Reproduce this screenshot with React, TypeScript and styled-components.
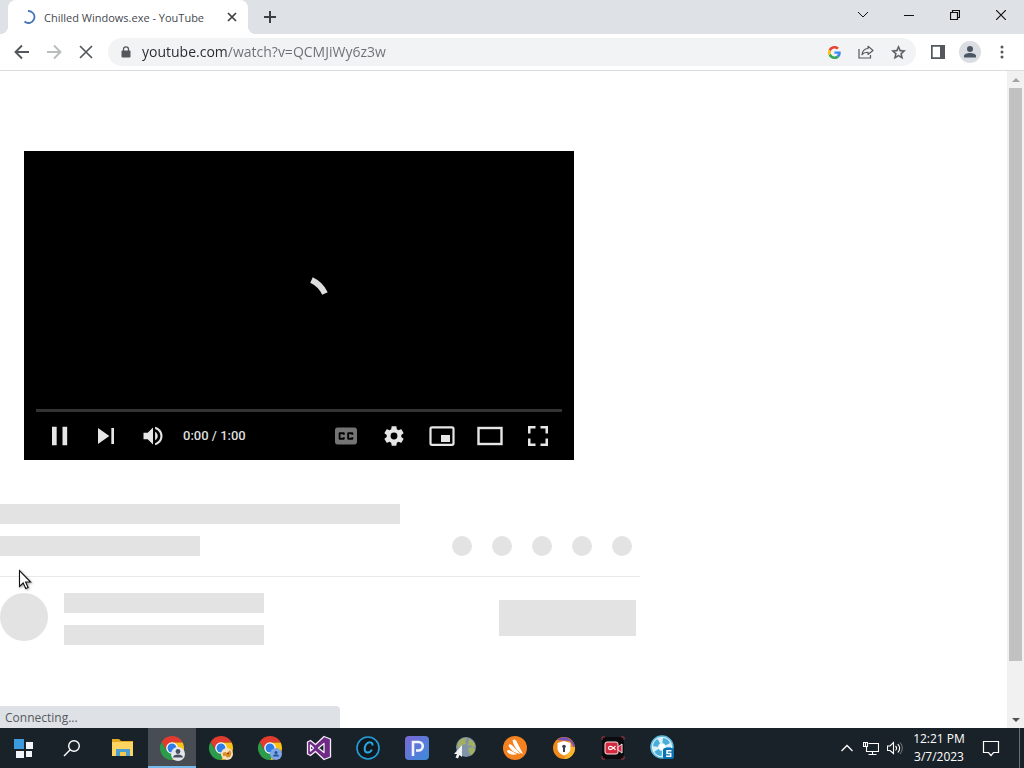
import React from "react";
import styled, { createGlobalStyle } from "styled-components";

const uiFont = `"Open Sans", "Noto Sans", sans-serif`;

const GlobalStyle = createGlobalStyle`
  *, *::before, *::after { box-sizing: border-box; }
  body { margin: 0; background: #fff; font-family: ${uiFont}; }
  button { border: 0; padding: 0; background: none; color: inherit; font: inherit; }
  svg { display: block; flex: none; }
`;

const Desktop = styled.div`
  position: relative;
  display: flex;
  flex-direction: column;
  min-height: 100vh;
  overflow: hidden;
`;

/* ---------- Browser window ---------- */

const TabStrip = styled.header`
  display: flex;
  height: 34px;
  padding-left: 8px;
  background: #dee1e6;
`;

const Tab = styled.div`
  position: relative;
  display: flex;
  align-items: center;
  width: 240px;
  padding: 0 8px 0 14px;
  gap: 8px;
  background: #fff;
  border-radius: 8px 8px 0 0;
  color: #45494d;
  font-size: 11px;

  &::before,
  &::after {
    content: "";
    position: absolute;
    bottom: 0;
    width: 8px;
    height: 8px;
  }
  &::before {
    right: 100%;
    background: radial-gradient(circle at 0 0, transparent 8px, #fff 8px);
  }
  &::after {
    left: 100%;
    background: radial-gradient(circle at 100% 0, transparent 8px, #fff 8px);
  }
`;

const TabTitle = styled.span`
  flex: 1;
  white-space: nowrap;
`;

const TabButton = styled.button`
  display: grid;
  place-items: center;
  width: 16px;
  height: 16px;
  color: #3c4043;
`;

const NewTabButton = styled(TabButton)`
  width: 28px;
  height: 34px;
  margin-left: 8px;
`;

const WindowControls = styled.div`
  display: flex;
  margin-left: auto;
`;

const WindowButton = styled.button`
  display: grid;
  place-items: center;
  width: 46px;
  height: 29px;
  color: #111;
`;

const Toolbar = styled.nav`
  display: flex;
  align-items: center;
  gap: 4px;
  height: 37px;
  padding: 0 8px;
  background: #fff;
  border-bottom: 1px solid #d9dbde;
`;

const ToolButton = styled.button<{ $dim?: boolean }>`
  display: grid;
  place-items: center;
  width: 28px;
  height: 28px;
  flex: none;
  color: ${(p) => (p.$dim ? "#babcbe" : "#54585c")};
`;

const Omnibox = styled.div`
  display: flex;
  align-items: center;
  flex: 1;
  gap: 4px;
  height: 28px;
  margin: 0 4px;
  padding: 0 4px 0 12px;
  border-radius: 14px;
  background: #f1f3f4;
  color: #54585c;
`;

const AddressInput = styled.input`
  flex: 1;
  min-width: 0;
  margin-left: 6px;
  padding: 0;
  border: 0;
  outline: 0;
  font-family: ${uiFont};
  font-size: 14px;
  line-height: 20px;
  background: linear-gradient(90deg, #27292c 86px, #6b6f73 86px);
  -webkit-background-clip: text;
  background-clip: text;
  -webkit-text-fill-color: transparent;
`;

const Viewport = styled.div`
  position: relative;
  display: flex;
  flex: 1;
`;

const Page = styled.main`
  flex: 1;
  min-width: 0;
  padding: 80px 0 61px;
`;

const Scrollbar = styled.div`
  display: flex;
  flex-direction: column;
  width: 17px;
  background: #f1f1f1;
`;

const ScrollArrow = styled.button`
  display: grid;
  place-items: center;
  height: 17px;
`;

const ScrollTrack = styled.div`
  flex: 1;
  padding: 0 2px;
`;

const ScrollThumb = styled.div`
  height: 92%;
  background: #c1c1c1;
`;

const StatusBubble = styled.div`
  position: absolute;
  left: 0;
  bottom: 0;
  width: 340px;
  height: 22px;
  padding-left: 5px;
  border-radius: 0 4px 0 0;
  background: #dee1e6;
  color: #55595d;
  font-size: 12px;
  line-height: 24px;
`;

/* ---------- Video player ---------- */

const Player = styled.section`
  position: relative;
  display: flex;
  flex-direction: column;
  justify-content: flex-end;
  max-width: 550px;
  height: 309px;
  margin-left: 24px;
  padding: 0 12px;
  background: #000;
`;

const Spinner = styled.div`
  position: absolute;
  inset: 0;
  display: grid;
  place-items: center;
`;

const ProgressBar = styled.div`
  height: 3px;
  background: #333;
`;

const PlayerControls = styled.div`
  position: relative;
  display: flex;
  align-items: center;
  height: 48px;
  color: #e6e6e6;
`;

const PlayerButton = styled.button<{ $narrow?: boolean }>`
  display: grid;
  place-items: center;
  width: ${(p) => (p.$narrow ? 46 : 48)}px;
  height: 48px;
`;

const Time = styled.span`
  flex: 1;
  padding-left: 7px;
  font-family: Roboto, "Liberation Sans", sans-serif;
  font-size: 13px;
  font-weight: 500;
  line-height: 48px;
  color: #ddd;
`;

/* ---------- Loading placeholders ---------- */

const Meta = styled.section`
  max-width: 640px;
  margin-top: 44px;
`;

const Bar = styled.div<{ $width: number }>`
  width: ${(p) => p.$width}px;
  height: 20px;
  background: #e3e3e3;
`;

const InfoRow = styled.div`
  display: flex;
  justify-content: space-between;
  margin-top: 12px;
  padding: 0 8px 20px 0;
  border-bottom: 1px solid #e9e9e9;
`;

const Dots = styled.div`
  display: flex;
  gap: 20px;
`;

const Dot = styled.div<{ $size: number }>`
  width: ${(p) => p.$size}px;
  height: ${(p) => p.$size}px;
  border-radius: 50%;
  background: #e3e3e3;
`;

const OwnerRow = styled.div`
  display: flex;
  gap: 16px;
  padding: 16px 4px 0 0;
`;

const OwnerLines = styled.div`
  display: flex;
  flex: 1;
  flex-direction: column;
  gap: 12px;
`;

const SubscribeBlock = styled.div`
  width: 137px;
  height: 36px;
  margin-top: 7px;
  background: #e3e3e3;
`;

const Pointer = styled.svg`
  position: absolute;
  left: 18px;
  top: 569px;
  filter: drop-shadow(1px 1px 1px rgba(0, 0, 0, 0.35));
`;

/* ---------- Taskbar ---------- */

const Taskbar = styled.footer`
  display: flex;
  align-items: stretch;
  height: 40px;
  background: #1a2229;
  color: #fff;
`;

const Apps = styled.div`
  display: flex;
  gap: 1px;
  margin-left: 3px;
`;

const TaskButton = styled.button<{ $active?: boolean }>`
  display: grid;
  place-items: center;
  width: 48px;
  background: ${(p) => (p.$active ? "#484d54" : "none")};
  box-shadow: ${(p) => (p.$active ? "inset 0 -2px #76b9ed" : "none")};
`;

const Tray = styled.div`
  display: flex;
  align-items: stretch;
  margin-left: auto;
`;

const TrayButton = styled.button<{ $width?: number }>`
  display: grid;
  place-items: center;
  width: ${(p) => p.$width ?? 24}px;
`;

const Clock = styled.button`
  width: 64px;
  font-size: 12px;
  line-height: 18px;
  text-align: center;
  white-space: nowrap;
`;

const ShowDesktop = styled.button`
  width: 5px;
  margin-left: 8px;
  border-left: 1px solid #6c7175;
`;

/* ---------- Drawings ---------- */

type IconProps = { size: number; box: number; children: React.ReactNode };

const Icon = ({ size, box, children }: IconProps) => (
  <svg width={size} height={size} viewBox={`0 0 ${box} ${box}`} fill="none" aria-hidden="true">
    {children}
  </svg>
);

const ChromeLogo = ({ badge }: { badge: React.ReactNode }) => (
  <svg width="28" height="28" viewBox="-1 -1 28 28" fill="none" aria-hidden="true">
    <path d="M13 7.500h10.700A12 12 0 0 0 2.600 7l5.400 9z" fill="#e33b2e" />
    <path d="M18 16 13 25A12 12 0 0 0 23.700 7.500H13z" fill="#fbc116" />
    <path d="M8 16 2.600 7A12 12 0 0 0 13 25l5-9z" fill="#2c9c4b" />
    <circle cx="13" cy="13" r="5.800" fill="#fff" />
    <circle cx="13" cy="13" r="4.500" fill="#2f7de9" />
    {badge}
  </svg>
);

const personBadge = (
  <>
    <circle cx="19" cy="19" r="7" fill="#e4e7ec" />
    <circle cx="19" cy="16.500" r="2.400" fill="#4a5060" />
    <path d="M14 22.500c0-4 10-4 10 0z" fill="#4a5060" />
  </>
);

const foxBadge = (
  <>
    <circle cx="19" cy="19" r="6" fill="#f6e3bd" />
    <path d="m14.500 18 2.500-1 2 1 3-3 1.500 3-1.500 4-3 .500-1.500-2-2 1z" fill="#dd8a23" />
    <circle cx="20" cy="18.500" r="1" fill="#7c4a1b" />
  </>
);

const blueBadge = (
  <>
    <circle cx="19" cy="19" r="6" fill="#7ea6e3" />
    <circle cx="19" cy="17.500" r="1.500" fill="#26509c" />
    <path d="M16 21.500c0-3 6-3 6 0z" fill="#26509c" />
  </>
);

const VisualStudio = () => (
  <Icon size={26} box={26}>
    <path
      d="m18 1.500 6.500 2.500v18L18 24.500l-8.500-8L4.500 20.500l-3-1.500V7l3-1.500 5 4zM18 8.500 12.500 13l5.500 4.500zM4.500 10v6l3-3z"
      fill="#6f2a86"
      fillRule="evenodd"
      stroke="#f4eef6"
      strokeWidth="1.300"
      strokeLinejoin="round"
    />
  </Icon>
);

const CircleC = () => (
  <Icon size={26} box={26}>
    <circle cx="13" cy="13" r="11" fill="#10191f" stroke="#239fdc" strokeWidth="1.600" />
    <path d="M17.500 10.500c.500-4-4.500-4-6.500-1-2 3.200-2 7.500 1.500 8 2 .200 3.500-1 4.300-2.800" stroke="#2aa6e0" strokeWidth="2" />
  </Icon>
);

const ParkingP = () => (
  <Icon size={24} box={24}>
    <defs>
      <linearGradient id="pfill" x1="0" y1="0" x2="1" y2="1">
        <stop offset="0" stopColor="#7b68d4" />
        <stop offset="1" stopColor="#3c8bdc" />
      </linearGradient>
    </defs>
    <rect width="24" height="24" rx="4" fill="url(#pfill)" />
    <path d="M8 20V6h5.500a4 4 0 0 1 0 8.500H11" stroke="#f3f6ff" strokeWidth="2.600" />
  </Icon>
);

const GlobePointer = () => (
  <Icon size={24} box={24}>
    <circle cx="12" cy="11" r="10" fill="#8093a8" />
    <path d="M5 5c3-3 6-3 8-3l-2 3 1 3-4 1-3 3-2-2zM15 3c3 1 6 4 6.500 7l-3 1-2-2-3 1 1-3zM14 12l4-1 3 2c-.500 3-2 5-4 6.500l-2-3z" fill="#a3b060" />
    <path d="M8 9v12l-2.500-2L4 22.500l-2.500-1L3 18H0z" fill="#eef0f2" />
  </Icon>
);

const Avast = () => (
  <Icon size={24} box={24}>
    <circle cx="12" cy="12" r="12" fill="#f6811f" />
    <path d="M9.500 4.500c1.500-1.500 3-1 4 .800L20 18c-4.500-1.500-9-7-10.500-13.500z" fill="#fff" />
    <path d="M5.500 9.500c.500-1.500 2-1.700 3-.700l9 9c-5-.300-10-3.300-12-8.300z" fill="#fff" />
    <path d="M4 15.500c0-1.300 1.200-2 2.300-1.400l7.700 4c-4 1.300-8.500.400-10-2.600z" fill="#fff" />
  </Icon>
);

const SecureBrowser = () => (
  <Icon size={24} box={24}>
    <circle cx="12" cy="12" r="11" fill="#f08a1c" />
    <path d="M5 4a11 11 0 0 1 18 9L18 5z" fill="#7651bd" />
    <path d="M23 11a11 11 0 0 1-11 12l6-12z" fill="#fbb52c" />
    <path d="m12 5 6.500 2v5c0 4-3 6-6.500 7.500-3.500-1.500-6.500-3.500-6.500-7.500V7z" fill="#fff" />
    <circle cx="12" cy="10.500" r="1.800" fill="#39414d" />
    <path d="M11 11h2v5h-2z" fill="#39414d" />
  </Icon>
);

const ScreenRecorder = () => (
  <Icon size={24} box={24}>
    <rect x="1" y="1" width="22" height="22" fill="#0c0c0e" />
    <path d="M1 4V1h3M20 1h3v3M1 20v3h3M20 23h3v-3" stroke="#a4384a" />
    <rect x="4" y="6" width="13" height="12" rx="2" fill="#d3283e" stroke="#f7e8ea" />
    <path d="m17 11 4-3v9l-4-3z" fill="#d3283e" stroke="#f7e8ea" />
    <path d="M14.500 10c-3 4-7 4.500-7 2s4-2.500 7 2" stroke="#fff" strokeWidth="1.200" />
  </Icon>
);

const BlueReel = () => (
  <Icon size={26} box={26}>
    <circle cx="13" cy="12" r="11" fill="#d9f1fa" stroke="#5cb9de" strokeWidth="1.500" />
    <circle cx="13" cy="12" r="6.500" stroke="#49add8" strokeWidth="5" strokeDasharray="6.200 4" />
    <circle cx="13" cy="12" r="3" fill="#fff" />
    <rect x="14" y="13" width="11" height="11" rx="2" fill="#0873b5" />
    <path d="M22.500 15.800h-4.500v2.700h3.700v2.700H17" stroke="#fff" strokeWidth="1.500" />
  </Icon>
);

const GEAR =
  "m23.940 18.780c.030-.250.050-.510.050-.780 0-.270-.020-.520-.050-.780l1.680-1.320c.150-.120.190-.330.090-.510l-1.600-2.760c-.090-.170-.310-.240-.480-.170l-1.990.800c-.410-.320-.860-.580-1.350-.780l-.300-2.120c-.020-.190-.190-.330-.390-.330h-3.200c-.200 0-.360.140-.390.330l-.300 2.120c-.480.200-.930.470-1.350.780l-1.990-.800c-.180-.070-.390 0-.480.170l-1.600 2.760c-.100.170-.050.390.090.510l1.680 1.320c-.030.250-.050.520-.050.780 0 .260.020.520.050.780l-1.680 1.320c-.150.120-.190.330-.090.510l1.600 2.760c.090.170.310.240.480.170l1.990-.800c.410.320.860.580 1.350.780l.300 2.120c.020.190.190.330.390.330h3.200c.200 0 .360-.140.390-.330l.300-2.120c.480-.200.930-.470 1.350-.780l1.990.800c.180.070.390 0 .480-.170l1.600-2.760c.090-.170.050-.390-.090-.510zM18 20.800a2.800 2.800 0 1 1 0-5.600 2.800 2.800 0 0 1 0 5.600z";

export default function App() {
  return (
    <Desktop>
      <GlobalStyle />
      <TabStrip>
        <Tab>
          <Icon size={14} box={14}>
            <path d="M6 1a6 6 0 1 1-3.500 10.500" stroke="#4675b8" strokeWidth="1.800" />
          </Icon>
          <TabTitle>Chilled Windows.exe - YouTube</TabTitle>
          <TabButton aria-label="Close tab">
            <Icon size={16} box={16}>
              <path d="m4 4 8 8M12 4l-8 8" stroke="currentColor" strokeWidth="1.700" />
            </Icon>
          </TabButton>
        </Tab>
        <NewTabButton aria-label="New tab">
          <Icon size={12} box={12}>
            <path d="M6 0v12M0 6h12" stroke="currentColor" strokeWidth="2" />
          </Icon>
        </NewTabButton>
        <WindowControls>
          <WindowButton aria-label="Search tabs">
            <Icon size={12} box={12}>
              <path d="m1 3 5 5 5-5" stroke="currentColor" />
            </Icon>
          </WindowButton>
          <WindowButton aria-label="Minimize">
            <Icon size={10} box={10}>
              <path d="M0 5.500h10" stroke="currentColor" />
            </Icon>
          </WindowButton>
          <WindowButton aria-label="Restore">
            <Icon size={10} box={10}>
              <path d="M.500 2.500h7v7h-7zM2.500 2.500v-2h7v7h-2" stroke="currentColor" strokeWidth="1.200" />
            </Icon>
          </WindowButton>
          <WindowButton aria-label="Close">
            <Icon size={10} box={10}>
              <path d="m0 0 10 10M10 0 0 10" stroke="currentColor" strokeWidth="1.200" />
            </Icon>
          </WindowButton>
        </WindowControls>
      </TabStrip>

      <Toolbar>
        <ToolButton aria-label="Back">
          <Icon size={16} box={16}>
            <path d="M15 8H2M8 1.500 1.500 8 8 14.500" stroke="currentColor" strokeWidth="1.900" />
          </Icon>
        </ToolButton>
        <ToolButton aria-label="Forward" $dim>
          <Icon size={16} box={16}>
            <path d="M1 8h13M8 1.500 14.500 8 8 14.500" stroke="currentColor" strokeWidth="1.900" />
          </Icon>
        </ToolButton>
        <ToolButton aria-label="Stop loading">
          <Icon size={16} box={16}>
            <path d="m2 2 12 12M14 2 2 14" stroke="currentColor" strokeWidth="1.700" />
          </Icon>
        </ToolButton>
        <Omnibox>
          <Icon size={12} box={12}>
            <path d="M3.500 5V3.300a2.500 2.500 0 0 1 5 0V5" stroke="currentColor" strokeWidth="1.300" />
            <rect x="1.500" y="4.500" width="9" height="7" rx="1" fill="currentColor" />
          </Icon>
          <AddressInput aria-label="Address" defaultValue="youtube.com/watch?v=QCMJiWy6z3w" spellCheck={false} />
          <ToolButton aria-label="Google">
            <Icon size={13} box={48}>
              <path fill="#ea4335" d="M24 9.500c3.540 0 6.710 1.220 9.210 3.600l6.850-6.850C35.900 2.380 30.470 0 24 0 14.620 0 6.510 5.380 2.560 13.220l7.980 6.190C12.430 13.720 17.740 9.500 24 9.500z" />
              <path fill="#4285f4" d="M46.980 24.550c0-1.570-.150-3.090-.380-4.550H24v9.020h12.940c-.580 2.960-2.260 5.480-4.780 7.180l7.730 6c4.510-4.180 7.090-10.360 7.090-17.650z" />
              <path fill="#fbbc05" d="M10.530 28.590c-.480-1.450-.760-2.990-.760-4.590s.270-3.140.760-4.590l-7.980-6.190C.920 16.460 0 20.120 0 24s.920 7.540 2.560 10.780z" />
              <path fill="#34a853" d="M24 48c6.480 0 11.930-2.130 15.890-5.810l-7.730-6c-2.150 1.450-4.920 2.300-8.160 2.300-6.260 0-11.570-4.220-13.470-9.910l-7.980 6.190C6.510 42.620 14.620 48 24 48z" />
            </Icon>
          </ToolButton>
          <ToolButton aria-label="Share this page">
            <Icon size={16} box={16}>
              <path d="M1 5v9h11.500v-3" stroke="currentColor" strokeWidth="1.200" />
              <path d="M10 2.200 15 6.500l-5 4V8.300c-3 0-4.600.500-6 2.500.300-3.500 2.300-6 6-6.300z" stroke="currentColor" strokeWidth="1.100" strokeLinejoin="round" />
            </Icon>
          </ToolButton>
          <ToolButton aria-label="Bookmark this page">
            <Icon size={17} box={24}>
              <path fill="currentColor" d="m22 9.240-7.190-.620L12 2 9.190 8.630 2 9.240l5.460 4.730L5.820 21 12 17.270 18.180 21l-1.630-7.030zM12 15.400l-3.760 2.270 1-4.280-3.320-2.880 4.380-.380L12 6.100l1.710 4.040 4.380.380-3.320 2.880 1 4.280z" stroke="currentColor" strokeWidth=".500" />
            </Icon>
          </ToolButton>
        </Omnibox>
        <ToolButton aria-label="Side panel">
          <Icon size={14} box={14}>
            <path d="M0 0h14v14H0zM1.700 1.700v10.600H9V1.700z" fill="currentColor" fillRule="evenodd" />
          </Icon>
        </ToolButton>
        <ToolButton aria-label="Profile">
          <Icon size={22} box={22}>
            <circle cx="11" cy="11" r="11" fill="#dadde2" />
            <circle cx="11" cy="8" r="3" fill="#4b5663" />
            <path d="M5 16.500v-1.500c0-4 12-4 12 0v1.500z" fill="#4b5663" />
          </Icon>
        </ToolButton>
        <ToolButton aria-label="Menu">
          <Icon size={14} box={14}>
            <circle cx="7" cy="2" r="1.500" fill="currentColor" />
            <circle cx="7" cy="7" r="1.500" fill="currentColor" />
            <circle cx="7" cy="12" r="1.500" fill="currentColor" />
          </Icon>
        </ToolButton>
      </Toolbar>

      <Viewport>
        <Page>
          <Player aria-label="Video player">
            <Spinner>
              <Icon size={64} box={64}>
                <path d="M44.500 6A28.500 28.500 0 0 1 58 19.500" stroke="#dedede" strokeWidth="6" />
              </Icon>
            </Spinner>
            <ProgressBar />
            <PlayerControls>
              <PlayerButton $narrow aria-label="Pause">
                <Icon size={42} box={36}>
                  <path fill="currentColor" d="M12 26h4V10h-4zM21 26h4V10h-4z" />
                </Icon>
              </PlayerButton>
              <PlayerButton aria-label="Next">
                <Icon size={48} box={36}>
                  <path fill="currentColor" d="m12 24 8.500-6L12 12zM22 12v12h2V12z" />
                </Icon>
              </PlayerButton>
              <PlayerButton $narrow aria-label="Mute">
                <Icon size={38} box={36}>
                  <path transform="translate(1 0)" fill="currentColor" d="M8 21h4l5 5V10l-5 5H8zM19 14v8c1.480-.680 2.500-2.230 2.500-4 0-1.740-1.020-3.260-2.500-4zM19 11.290c2.890.860 5 3.540 5 6.710s-2.110 5.850-5 6.710v2.060c4.010-.910 7-4.490 7-8.770s-2.990-7.860-7-8.770z" />
                </Icon>
              </PlayerButton>
              <Time>0:00 / 1:00</Time>
              <PlayerButton aria-label="Subtitles">
                <Icon size={44} box={36}>
                  <path fill="#747474" d="M11 11c-1.110 0-2 .900-2 2v10c0 1.100.890 2 2 2h14c1.100 0 2-.900 2-2V13c0-1.100-.900-2-2-2zM17 17h-1.500v-.500h-2v3h2V19H17v1c0 .550-.450 1-1 1h-3c-.550 0-1-.450-1-1v-4c0-.550.450-1 1-1h3c.550 0 1 .450 1 1zM24 17h-1.500v-.500h-2v3h2V19H24v1c0 .550-.450 1-1 1h-3c-.550 0-1-.450-1-1v-4c0-.550.450-1 1-1h3c.550 0 1 .450 1 1z" />
                </Icon>
              </PlayerButton>
              <PlayerButton aria-label="Settings">
                <Icon size={44} box={36}>
                  <path fill="currentColor" d={GEAR} />
                </Icon>
              </PlayerButton>
              <PlayerButton aria-label="Miniplayer">
                <Icon size={26} box={26}>
                  <rect x="1.500" y="4.300" width="23" height="17.500" rx="1.500" stroke="currentColor" strokeWidth="2.200" />
                  <rect x="12" y="12" width="9" height="7" fill="currentColor" />
                </Icon>
              </PlayerButton>
              <PlayerButton aria-label="Theater mode">
                <Icon size={26} box={26}>
                  <rect x="1.500" y="5" width="23" height="16" stroke="currentColor" strokeWidth="2.400" />
                </Icon>
              </PlayerButton>
              <PlayerButton aria-label="Full screen">
                <Icon size={20} box={20}>
                  <path d="M1.250 7.500V1.250H7.500M12.500 1.250h6.250V7.500M18.750 12.500v6.250H12.500M7.500 18.750H1.250V12.500" stroke="currentColor" strokeWidth="2.500" />
                </Icon>
              </PlayerButton>
            </PlayerControls>
          </Player>

          <Meta aria-label="Loading video details">
            <Bar $width={400} />
            <InfoRow>
              <Bar $width={200} />
              <Dots>
                {[0, 1, 2, 3, 4].map((n) => (
                  <Dot key={n} $size={20} />
                ))}
              </Dots>
            </InfoRow>
            <OwnerRow>
              <Dot $size={48} />
              <OwnerLines>
                <Bar $width={200} />
                <Bar $width={200} />
              </OwnerLines>
              <SubscribeBlock />
            </OwnerRow>
          </Meta>
        </Page>
        <Scrollbar>
          <ScrollArrow aria-label="Scroll up">
            <Icon size={8} box={8}>
              <path d="m0 6 4-4 4 4z" fill="#a3a3a3" />
            </Icon>
          </ScrollArrow>
          <ScrollTrack>
            <ScrollThumb />
          </ScrollTrack>
          <ScrollArrow aria-label="Scroll down">
            <Icon size={8} box={8}>
              <path d="m0 2 4 4 4-4z" fill="#505050" />
            </Icon>
          </ScrollArrow>
        </Scrollbar>
        <StatusBubble role="status">Connecting...</StatusBubble>
      </Viewport>

      <Taskbar>
        <TaskButton aria-label="Start">
          <Icon size={20} box={20}>
            <path d="M0 1h10v10H0z" fill="#3c9ade" />
            <path d="M12 4h7v7h-7zM2 13h8v8H2zM12 13h6v6h-6z" fill="#f2f5fa" />
          </Icon>
        </TaskButton>
        <TaskButton aria-label="Search">
          <Icon size={18} box={18}>
            <circle cx="11" cy="7" r="5.300" stroke="#fff" strokeWidth="1.400" />
            <path d="M7.200 10.800 1 17" stroke="#fff" strokeWidth="1.400" />
          </Icon>
        </TaskButton>
        <Apps>
          <TaskButton aria-label="File Explorer">
            <Icon size={22} box={22}>
              <path d="M0 2h7l2 2h12v4H0z" fill="#e5a823" />
              <path d="M0 5h21v14H0z" fill="#fcd462" />
              <path d="M4 12h14v7H4z" fill="#4a9fd0" />
              <path d="M8 15h6v4H8z" fill="#f4c64e" />
            </Icon>
          </TaskButton>
          <TaskButton $active aria-label="Google Chrome">
            <ChromeLogo badge={personBadge} />
          </TaskButton>
          <TaskButton aria-label="Google Chrome, second profile">
            <ChromeLogo badge={foxBadge} />
          </TaskButton>
          <TaskButton aria-label="Google Chrome, third profile">
            <ChromeLogo badge={blueBadge} />
          </TaskButton>
          <TaskButton aria-label="Visual Studio"><VisualStudio /></TaskButton>
          <TaskButton aria-label="Cleaner"><CircleC /></TaskButton>
          <TaskButton aria-label="PicPick"><ParkingP /></TaskButton>
          <TaskButton aria-label="Web"><GlobePointer /></TaskButton>
          <TaskButton aria-label="Avast"><Avast /></TaskButton>
          <TaskButton aria-label="Secure Browser"><SecureBrowser /></TaskButton>
          <TaskButton aria-label="Screen Recorder"><ScreenRecorder /></TaskButton>
          <TaskButton aria-label="Media"><BlueReel /></TaskButton>
        </Apps>
        <Tray>
          <TrayButton aria-label="Show hidden icons">
            <Icon size={12} box={12}>
              <path d="m.500 9 5.500-5.500L11.500 9" stroke="#fff" strokeWidth="1.300" />
            </Icon>
          </TrayButton>
          <TrayButton aria-label="Network">
            <Icon size={16} box={16}>
              <path d="M5.500 3.500h10v8H3.500V7M9.500 11.500v3M5.500 14.500h8M.500 2.500h4v4h-4zM2.500 2.500v4" stroke="#fff" strokeWidth="1.100" />
            </Icon>
          </TrayButton>
          <TrayButton aria-label="Volume">
            <Icon size={16} box={16}>
              <path d="M.500 6v4.500H3l3.500 3V2.500L3 6zM8.500 6c1.200 1.200 1.200 3.200 0 4.500M10.800 4c2.200 2.500 2.200 6 0 8.500" stroke="#fff" strokeWidth="1.100" />
              <path d="M13 2.500c3 3.500 3 8 0 11.500" stroke="#7d8287" />
            </Icon>
          </TrayButton>
          <Clock aria-label="Date and time">
            <div>12:21 PM</div>
            <div>3/7/2023</div>
          </Clock>
          <TrayButton $width={40} aria-label="Notifications">
            <Icon size={18} box={18}>
              <path d="M1.500 2.500h15v11h-5L9 16.500l-2.500-3h-5z" stroke="#fff" strokeWidth="1.200" />
            </Icon>
          </TrayButton>
          <ShowDesktop aria-label="Show desktop" />
        </Tray>
      </Taskbar>

      <Pointer width="14" height="21" viewBox="0 0 14 21" aria-hidden="true">
        <path d="M1.500 1.500v16l3.700-3.500 2.500 5.500 2.400-1-2.500-5.500h5z" fill="#fff" stroke="#111" strokeWidth="1.100" />
      </Pointer>
    </Desktop>
  );
}
